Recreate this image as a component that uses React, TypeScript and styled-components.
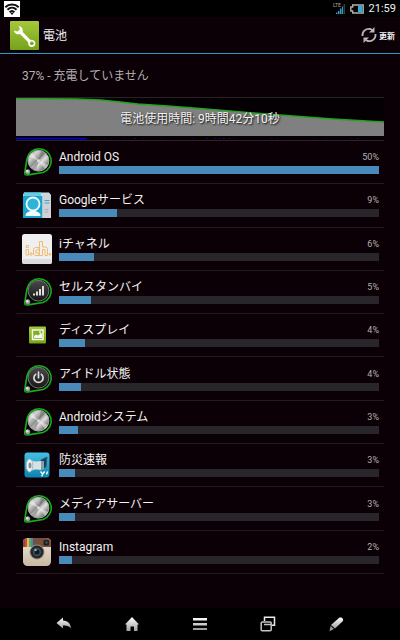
import React from "react";
import styled, { createGlobalStyle } from "styled-components";

const GlobalStyle = createGlobalStyle`
  *, *::before, *::after { box-sizing: border-box; }
  body {
    margin: 0;
    background: #0b0005;
    color: #f2f2f2;
    font-family: Roboto, "Noto Sans CJK JP", sans-serif;
    font-size: 12px;
  }
  button { border: 0; padding: 0; background: none; color: inherit; font: inherit; }
  h1, h2, p, ul { margin: 0; padding: 0; font-weight: 400; font-size: 12px; }
  svg { display: block; }
`;

const Page = styled.div`
  display: flex;
  flex-direction: column;
  min-height: 100vh;
`;

const StatusBar = styled.div`
  display: flex;
  align-items: center;
  gap: 5px;
  height: 17px;
  padding: 0 4px;
  background: #000;
`;

const Spacer = styled.span`
  flex: 1;
`;

const Clock = styled.time`
  font-size: 11px;
  line-height: 17px;
`;

const ActionBar = styled.header`
  display: flex;
  align-items: center;
  gap: 4px;
  height: 37px;
  padding: 0 5px 0 10px;
  border-bottom: 1px solid #2f97c6;
`;

const Title = styled.h1`
  flex: 1;
  padding-top: 2px;
  line-height: 18px;
`;

const RefreshButton = styled.button`
  display: flex;
  align-items: center;
  gap: 2px;
  font-size: 8px;
  font-weight: 700;
`;

const Main = styled.main`
  flex: 1;
  padding: 0 16px;
`;

const Summary = styled.p`
  padding: 13px 6px 11px;
  line-height: 18px;
  color: #b4b0b3;
`;

const ChartPanel = styled.section`
  display: grid;
  height: 44px;
  margin-top: 1px;
  border-top: 1px solid #2a2227;
  border-bottom: 1px solid #2a2227;
  background: #050003;

  & > * { grid-area: 1 / 1; }
`;

const ChartLabel = styled.h2`
  align-self: center;
  text-align: center;
  line-height: 18px;
  text-shadow: 1px 1px 2px #000;
`;

const UsageList = styled.ul`
  display: grid;
  grid-auto-rows: 1fr;
  min-height: 433px;
  list-style: none;
`;

const UsageRow = styled.li`
  display: flex;
  align-items: center;
  gap: 6px;
  padding: 0 5px;
  border-bottom: 1px solid #241b21;
`;

const UsageBody = styled.div`
  flex: 1;
  padding-bottom: 2px;
`;

const UsageHead = styled.div`
  display: flex;
  align-items: center;
  justify-content: space-between;
  height: 18px;
`;

const AppName = styled.span`
  line-height: 18px;
`;

const Percent = styled.span`
  font-size: 9px;
  color: #b4b0b3;
`;

const Track = styled.div`
  height: 8px;
  background: #29262b;
`;

const Fill = styled.div`
  height: 100%;
  background: #488bba;
`;

const NavBar = styled.nav`
  display: grid;
  grid-template-columns: repeat(5, 1fr);
  height: 32px;
  padding: 0 30px;
  background: #000;
`;

const NavButton = styled.button`
  display: grid;
  place-items: center;
`;

const Definitions = () => (
  <svg width="0" height="0" aria-hidden="true">
    <defs>
      <linearGradient id="steel" x1="0" y1="0" x2="1" y2="1">
        <stop offset="0" stopColor="#777" />
        <stop offset=".25" stopColor="#d4d4d4" />
        <stop offset=".45" stopColor="#8f8f8f" />
        <stop offset=".6" stopColor="#e0e0e0" />
        <stop offset=".8" stopColor="#808080" />
        <stop offset="1" stopColor="#bfbfbf" />
      </linearGradient>
      <linearGradient id="dark" x1="0" y1="0" x2="0" y2="1">
        <stop offset="0" stopColor="#4a4a4a" />
        <stop offset="1" stopColor="#171717" />
      </linearGradient>
      <linearGradient id="green" x1="0" y1="0" x2="0" y2="1">
        <stop offset="0" stopColor="#a5c83a" />
        <stop offset="1" stopColor="#76a21b" />
      </linearGradient>
      <linearGradient id="silver" x1="0" y1="0" x2="0" y2="1">
        <stop offset="0" stopColor="#ffffff" />
        <stop offset="1" stopColor="#a0a0a0" />
      </linearGradient>
      <linearGradient id="cyan" x1="0" y1="0" x2="0" y2="1">
        <stop offset="0" stopColor="#45bfe2" />
        <stop offset="1" stopColor="#0d83b0" />
      </linearGradient>
      <linearGradient id="cream" x1="0" y1="0" x2="0" y2="1">
        <stop offset="0" stopColor="#efe6d8" />
        <stop offset="1" stopColor="#c8b8a4" />
      </linearGradient>
    </defs>
  </svg>
);

const Icon = ({ children }: { children: React.ReactNode }) => (
  <svg width="32" height="32" viewBox="0 0 32 32" aria-hidden="true">
    {children}
  </svg>
);

const Knob = ({ face, children }: { face: "steel" | "dark"; children?: React.ReactNode }) => (
  <Icon>
    <path
      d="M4 28.5 Q3.3 27.8 4 25 L6 13 A12.2 12.2 0 1 1 22 26.5 L7 28.9 Q4.8 29.2 4 28.5Z"
      fill="#050505"
      stroke="#14b01a"
      strokeWidth="1.6"
    />
    <circle cx="17.5" cy="14.7" r="10.4" fill={`url(#${face})`} stroke={face === "dark" ? "#777" : "#aaa"} />
    {face === "steel" && (
      <g>
        <path d="M17.5 14.7 L8 10.5 A10.4 10.4 0 0 1 11 6.7Z M17.5 14.7 L27 19 A10.4 10.4 0 0 1 24 22.8Z" fill="#fff" opacity=".45" />
        <path d="M17.5 14.7 L20 4.8 A10.2 10.2 0 0 1 24 7Z M17.5 14.7 L15 24.6 A10.2 10.2 0 0 1 11 22.4Z" fill="#555" opacity=".35" />
        <circle cx="17.5" cy="14.7" r="1.5" fill="#ddd" />
      </g>
    )}
    {children}
    <circle cx="6.7" cy="25.8" r="2.5" fill="#999" />
    <circle cx="6.2" cy="25.2" r="1.2" fill="#e4e4e4" />
  </Icon>
);

const AndroidIcon = () => <Knob face="steel" />;

const CellIcon = () => (
  <Knob face="dark">
    <path d="M12 19.5v-2h2v2zM15 19.5v-4h2v4zM18 19.5v-6.5h2v6.5zM21 19.5v-9.5h2v9.5z" fill="#ddd" />
  </Knob>
);

const IdleIcon = () => (
  <Knob face="dark">
    <path d="M14.6 11.3a4.6 4.6 0 1 0 5.8 0M17.5 9.2v5.5" fill="none" stroke="#ddd" strokeWidth="1.7" strokeLinecap="round" />
  </Knob>
);

const GoogleIcon = () => (
  <Icon>
    <path d="M3 3.5h25l2 2.500v23H2V6z" fill="#bfe6ef" />
    <path d="M3 3.500h17v3.500H2.500z" fill="#5fd0e8" />
    <path d="M2 7h19.500v22H2z" fill="#1aa5cb" />
    <path d="M21.500 4.500h7l1.500 2.500v22h-8.500z" fill="#cfd3d5" />
    <path d="M23.500 11h5v1h-5zM23.500 13.500h5v1h-5z" fill="#35a9c8" />
    <path d="M23.500 20h4v1h-4zM23.500 22.500h4v1h-4z" fill="#a8aeb0" />
    <circle cx="12" cy="15" r="6.500" fill="#2cb5d8" stroke="#f4fbfd" strokeWidth="1.800" />
    <path d="M4.500 27c0-3.500 3-5 7.500-5s7.500 1.500 7.500 5z" fill="#f4fbfd" />
  </Icon>
);

const ChannelIcon = () => (
  <Icon>
    <rect x="1" y="1" width="30" height="30" rx="2.500" fill="#f0eff0" />
    <rect x="1" y="26" width="30" height="5" rx="2.500" fill="#dddcdd" />
    <g fill="none" stroke="#eebd72" strokeWidth="1">
      <path d="M5 16.500h2.500v5.500H5zM5 12.500h2.500v2H5zM9 20h2v2H9z" />
      <path d="M18 14.500h-4l-1.500 1.500v5l1.500 1.500h4v-2.500h-3v-3h3z" />
      <path d="M18.500 8.500h3v5.500h3.500l1.500 1.500v7H24v-6h-2.500v6h-3z" />
      <path d="M28 20.500h1.500v1.500H28z" />
    </g>
  </Icon>
);

const DisplayIcon = () => (
  <Icon>
    <rect x="8" y="7.500" width="17" height="17" rx="1" fill="url(#green)" />
    <path d="M11.500 11h10.500v9.500H11.500z" fill="#7fae22" stroke="#f5f8e8" strokeWidth="1.500" />
    <path d="M13 19v-2l2-1.500 2 1 3-2.500 1 1v4z" fill="#f5f8e8" />
    <circle cx="19" cy="13.200" r="1" fill="#f5f8e8" />
  </Icon>
);

const AlertIcon = () => (
  <Icon>
    <rect x="3.500" y="3.500" width="25" height="25" rx="3" fill="url(#cyan)" />
    <path d="M20 11l6-3-1 10-5 2z" fill="#183f5b" stroke="#25607d" />
    <path d="M8.500 10 C13 13.500 17 12.500 20 12v9c-3-.5-7-1.500-11.500 2z" fill="#d9e1e4" />
    <path d="M20 12h3v8.500h-3z" fill="#8c9da6" />
    <ellipse cx="8.500" cy="16.500" rx="3.300" ry="6.500" fill="#f1f4f5" stroke="#a6b6bd" />
    <ellipse cx="9" cy="16.500" rx="1.500" ry="3" fill="#78919e" />
    <path d="M19.500 22.500l2.200 2.500 2-2.500M21.700 25l-1 2.500M26.500 22.500l-1 3M25 27.300v.3" fill="none" stroke="#fff" strokeWidth="1.300" />
  </Icon>
);

const InstagramIcon = () => (
  <Icon>
    <rect x="2" y="2" width="28" height="28" rx="4.500" fill="url(#cream)" />
    <path d="M2 11V6.500A4.500 4.500 0 0 1 6.500 2h19A4.500 4.500 0 0 1 30 6.500V11z" fill="#775040" />
    <path d="M4 2.800L6 2v9H4z" fill="#d84748" />
    <path d="M6 2h2v9H6z" fill="#e7bc45" />
    <path d="M8 2h2v9H8z" fill="#63ad58" />
    <path d="M10 2h2v9h-2z" fill="#3f8bc1" />
    <rect x="22.500" y="4" width="5.500" height="5.500" rx="1" fill="#211e20" />
    <circle cx="25.500" cy="6.500" r="1.200" fill="#48525b" />
    <circle cx="16" cy="16" r="7.500" fill="#958b82" />
    <circle cx="16" cy="16" r="6.500" fill="#252526" />
    <circle cx="16" cy="16" r="4.200" fill="#36505a" />
    <circle cx="16" cy="16" r="2.500" fill="#101a22" />
    <circle cx="14.500" cy="14" r="1.200" fill="#95afba" />
  </Icon>
);

const usage = [
  { name: "Android OS", percent: 50, fill: 100, Art: AndroidIcon },
  { name: "Googleサービス", percent: 9, fill: 18, Art: GoogleIcon },
  { name: "iチャネル", percent: 6, fill: 11, Art: ChannelIcon },
  { name: "セルスタンバイ", percent: 5, fill: 10, Art: CellIcon },
  { name: "ディスプレイ", percent: 4, fill: 8, Art: DisplayIcon },
  { name: "アイドル状態", percent: 4, fill: 7, Art: IdleIcon },
  { name: "Androidシステム", percent: 3, fill: 6, Art: AndroidIcon },
  { name: "防災速報", percent: 3, fill: 5, Art: AlertIcon },
  { name: "メディアサーバー", percent: 3, fill: 5, Art: AndroidIcon },
  { name: "Instagram", percent: 2, fill: 4, Art: InstagramIcon },
];

const navItems = [
  {
    label: "戻る",
    art: <path d="M.5 7L7 1.500v3c5 .2 7.500 3 8 8C13 9.800 10.500 9.200 7 9.500v3z" fill="url(#silver)" />,
  },
  {
    label: "ホーム",
    art: <path d="M8 1l7 7.500h-1.500V15H10v-4.500H6.500V15H2.500V8.500H1z" fill="url(#silver)" />,
  },
  {
    label: "メニュー",
    art: (
      <g>
        <path d="M1 2h14v2.500H1z" fill="#f4f4f4" />
        <path d="M1 7h14v2.500H1z" fill="#cfcfcf" />
        <path d="M1 12h14v2H1z" fill="#a0a0a0" />
      </g>
    ),
  },
  {
    label: "アプリ切替",
    art: (
      <g fill="none" strokeWidth="1.500">
        <path d="M4.500 5V1.200h10v8H12" stroke="#ececec" />
        <rect x="1.200" y="6" width="10" height="8.800" rx="1" stroke="#c4c4c4" />
        <path d="M4 8.500h7" stroke="#c4c4c4" />
      </g>
    ),
  },
  {
    label: "編集",
    art: (
      <g>
        <path d="M11.500 1.500h2L15 3v2l-8 7.500-4-3.500z" fill="url(#silver)" />
        <path d="M2.500 10l3.500 3-4.500 2.200z" fill="#999" />
      </g>
    ),
  },
];

export default function App() {
  return (
    <Page>
      <GlobalStyle />
      <Definitions />
      <StatusBar>
        <svg width="16" height="16" viewBox="0 0 16 16" aria-label="Wi-Fi">
          <path d="M0 0h16v16H0z" fill="#fff" />
          <g fill="none" stroke="#111" strokeWidth="2">
            <path d="M1.300 6.200C5 2.500 11 2.500 14.700 6.200" />
            <path d="M3.500 8.800c2.600-2.600 6.400-2.600 9 0" />
            <path d="M5.600 11.300c1.400-1.400 3.400-1.400 4.800 0" />
          </g>
          <path d="M6.500 12.500L8 14l1.500-1.500L8 11.500z" fill="#111" />
        </svg>
        <Spacer />
        <svg width="12" height="13" viewBox="0 0 12 13" aria-label="LTE">
          <text x="0" y="5" fontSize="5" fill="#aaa">LTE</text>
          <path d="M3 12v-1.500h1.500V12zM5 12V9h1.500v3zM7 12V6.500h1.500V12z" fill="#2ba0cf" />
          <path d="M9 12V4.500h1V12z" fill="#2ba0cf" />
          <path d="M10.500 12V2H12v10z" fill="#3c3c3c" />
        </svg>
        <svg width="14" height="10" viewBox="0 0 14 10" aria-label="37%">
          <path d="M2.700 1h10.500v8H2.700V7H.8V3h1.900z" fill="#000" stroke="#b5b0ac" strokeWidth="1.400" />
          <path d="M8 2h4.500v6H8z" fill="#34aad8" />
        </svg>
        <Clock>21:59</Clock>
      </StatusBar>
      <ActionBar>
        <svg width="29" height="29" viewBox="0 0 29 29" aria-hidden="true">
          <rect width="29" height="29" rx="1" fill="url(#green)" />
          <path
            d="M4 9.500C4.300 12.500 7 14 10 13l8.200 8.200c-.5 2.600 1.300 4.800 3.800 4.800 2.400 0 3.800-2 3.300-4.200-.5-2.300-2.600-3.300-4.800-2.900L12.700 11c.7-3-1-5.500-4-6l1.300 3.200L7.500 10.500z"
            fill="#fff"
          />
          <circle cx="21.800" cy="22.300" r="1.900" fill="#80aa22" />
        </svg>
        <Title>電池</Title>
        <RefreshButton type="button">
          <svg width="16" height="16" viewBox="0 0 16 16" aria-hidden="true">
            <g fill="none" stroke="#b8b4b6" strokeWidth="1.800">
              <path d="M1.500 9C1 4.500 5 1 9.500 2l2.500 1.500" />
              <path d="M14.500 7c.5 4.500-3.500 8-8 7L4 12.500" />
            </g>
            <path d="M13.500 0v5.500H8z M2.500 16v-5.500H8z" fill="#b8b4b6" />
          </svg>
          更新
        </RefreshButton>
      </ActionBar>
      <Main>
        <Summary>37% - 充電していません</Summary>
        <ChartPanel>
          <svg width="100%" height="42" viewBox="0 0 368 42" preserveAspectRatio="none" aria-hidden="true">
            <path d="M0 .5 L60 1 85 2 104 4 122 6 152 8 184 10.500 251 16 317 21 368 24 V38H0Z" fill="#808080" />
            <path d="M0 .5 L60 1 85 2 104 4 122 6 152 8 184 10.500 251 16 317 21 368 24" fill="none" stroke="#1fa51f" strokeWidth="1.300" />
            <path d="M0 40.500H71" stroke="#0000e0" strokeWidth="1.500" />
            <path
              d="M82 40.500h1M88 40.500h1M94 40.500h1M107 40.500h1M127 40.500h1M145 40.500h1M176 40.500h1M190 40.500h2M198 40.500h2M203 40.500h1M217 40.500h1M255 40.500h2M260 40.500h1M297 40.500h1M310 40.500h1M335 40.500h1M346 40.500h1"
              stroke="#08086a"
            />
            <path d="M118 40.500h1.500M207 40.500h1.500M213 40.500h1.500M341 40.500h1.500" stroke="#0a0ab4" />
          </svg>
          <ChartLabel>電池使用時間: 9時間42分10秒</ChartLabel>
        </ChartPanel>
        <UsageList>
          {usage.map(({ name, percent, fill, Art }) => (
            <UsageRow key={name}>
              <Art />
              <UsageBody>
                <UsageHead>
                  <AppName>{name}</AppName>
                  <Percent>{percent}%</Percent>
                </UsageHead>
                <Track>
                  <Fill style={{ width: `${fill}%` }} />
                </Track>
              </UsageBody>
            </UsageRow>
          ))}
        </UsageList>
      </Main>
      <NavBar>
        {navItems.map(({ label, art }) => (
          <NavButton key={label} type="button" aria-label={label}>
            <svg width="16" height="16" viewBox="0 0 16 16" aria-hidden="true">
              {art}
            </svg>
          </NavButton>
        ))}
      </NavBar>
    </Page>
  );
}
